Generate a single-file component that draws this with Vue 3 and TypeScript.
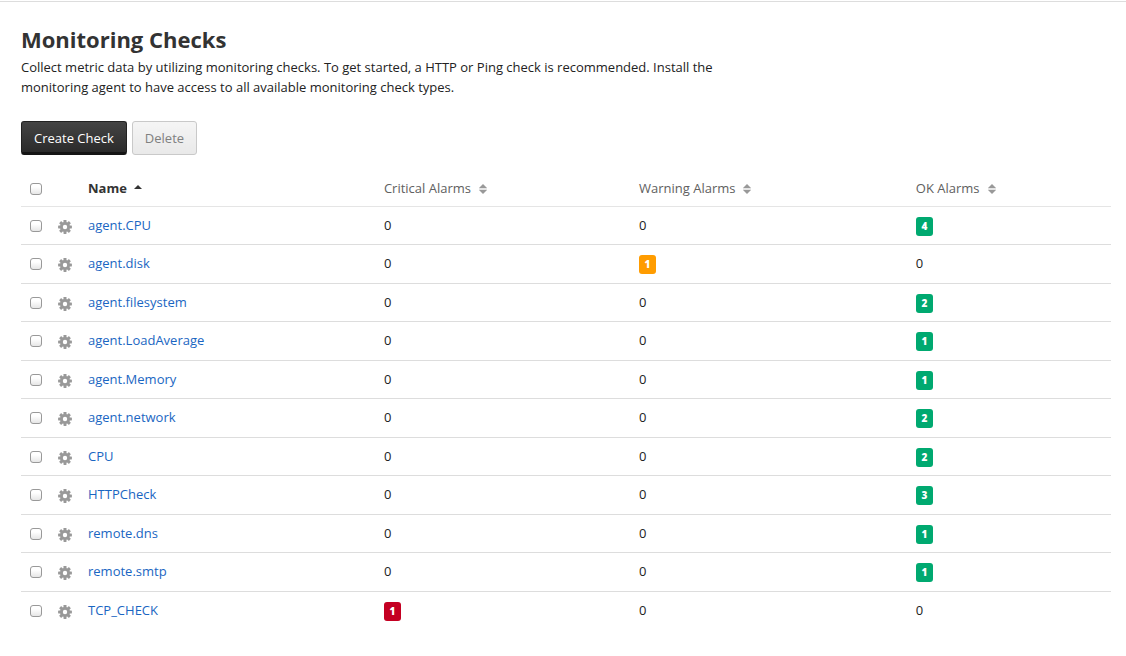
<script setup lang="ts">
import { computed, ref } from 'vue'

type CountKey = 'critical' | 'warning' | 'ok'
type SortKey = 'name' | CountKey

interface Check {
  name: string
  critical: number
  warning: number
  ok: number
}

const columns: { key: SortKey; label: string }[] = [
  { key: 'name', label: 'Name' },
  { key: 'critical', label: 'Critical Alarms' },
  { key: 'warning', label: 'Warning Alarms' },
  { key: 'ok', label: 'OK Alarms' },
]
const countKeys: CountKey[] = ['critical', 'warning', 'ok']

const checks: Check[] = [
  { name: 'agent.CPU', critical: 0, warning: 0, ok: 4 },
  { name: 'agent.disk', critical: 0, warning: 1, ok: 0 },
  { name: 'agent.filesystem', critical: 0, warning: 0, ok: 2 },
  { name: 'agent.LoadAverage', critical: 0, warning: 0, ok: 1 },
  { name: 'agent.Memory', critical: 0, warning: 0, ok: 1 },
  { name: 'agent.network', critical: 0, warning: 0, ok: 2 },
  { name: 'CPU', critical: 0, warning: 0, ok: 2 },
  { name: 'HTTPCheck', critical: 0, warning: 0, ok: 3 },
  { name: 'remote.dns', critical: 0, warning: 0, ok: 1 },
  { name: 'remote.smtp', critical: 0, warning: 0, ok: 1 },
  { name: 'TCP_CHECK', critical: 1, warning: 0, ok: 0 },
]

const sortKey = ref<SortKey>('name')
const ascending = ref(true)
const selected = ref<string[]>([])

const sorted = computed(() => {
  const key = sortKey.value
  const direction = ascending.value ? 1 : -1
  return [...checks].sort((a, b) => {
    const order =
      key === 'name'
        ? a.name.toLowerCase().localeCompare(b.name.toLowerCase())
        : a[key] - b[key]
    return order * direction
  })
})

const allSelected = computed({
  get: () => selected.value.length === checks.length,
  set: (on: boolean) => {
    selected.value = on ? checks.map((c) => c.name) : []
  },
})

function sortBy(key: SortKey) {
  ascending.value = sortKey.value === key ? !ascending.value : true
  sortKey.value = key
}
</script>

<template>
  <main class="page">
    <h1>Monitoring Checks</h1>
    <p class="intro">
      Collect metric data by utilizing monitoring checks. To get started, a HTTP or Ping check is
      recommended. Install the monitoring agent to have access to all available monitoring check
      types.
    </p>

    <div class="actions">
      <button type="button" class="btn primary">Create Check</button>
      <button type="button" class="btn" :disabled="selected.length === 0">Delete</button>
    </div>

    <table>
      <colgroup>
        <col class="col-select" />
        <col class="col-menu" />
        <col class="col-name" />
        <col class="col-critical" />
        <col class="col-warning" />
        <col />
      </colgroup>
      <thead>
        <tr>
          <th class="select">
            <input v-model="allSelected" type="checkbox" aria-label="Select all checks" />
          </th>
          <th></th>
          <th v-for="column in columns" :key="column.key" class="text" scope="col">
            <button
              type="button"
              class="sort"
              :class="{ active: sortKey === column.key }"
              @click="sortBy(column.key)"
            >
              {{ column.label }}
              <svg v-if="sortKey !== column.key" class="both" width="8" height="10" viewBox="0 0 8 10" aria-hidden="true">
                <path d="M4 0 8.2 4.2H-0.2ZM-0.2 5.8H8.2L4 10Z" />
              </svg>
              <svg v-else class="single" width="8" height="4" viewBox="0 0 8 4" aria-hidden="true">
                <path :d="ascending ? 'M4 0 8 4H0Z' : 'M0 0H8L4 4Z'" />
              </svg>
            </button>
          </th>
        </tr>
      </thead>
      <tbody>
        <tr v-for="check in sorted" :key="check.name">
          <td class="select">
            <input v-model="selected" type="checkbox" :value="check.name" :aria-label="`Select ${check.name}`" />
          </td>
          <td>
            <button type="button" class="gear" :aria-label="`Actions for ${check.name}`">
              <svg width="14" height="14" viewBox="0 0 14 14" aria-hidden="true">
                <g>
                  <rect x="5.5" y="0.1" width="3" height="13.8" rx="0.4" />
                  <rect x="5.5" y="0.1" width="3" height="13.8" rx="0.4" transform="rotate(45 7 7)" />
                  <rect x="5.5" y="0.1" width="3" height="13.8" rx="0.4" transform="rotate(90 7 7)" />
                  <rect x="5.5" y="0.1" width="3" height="13.8" rx="0.4" transform="rotate(135 7 7)" />
                  <circle cx="7" cy="7" r="5" />
                </g>
                <circle class="hole" cx="7" cy="7" r="2.2" />
              </svg>
            </button>
          </td>
          <td class="text"><a href="#">{{ check.name }}</a></td>
          <td v-for="key in countKeys" :key="key" :class="check[key] > 0 ? 'flagged' : 'text'">
            <span v-if="check[key] > 0" class="badge" :class="key">{{ check[key] }}</span>
            <template v-else>0</template>
          </td>
        </tr>
      </tbody>
    </table>
  </main>
</template>

<style>
body {
  margin: 0;
  background: #fff;
}
</style>

<style scoped>
.page {
  border-top: 1px solid #ddd;
  margin-top: 1px;
  padding: 21px 15px 24px 21px;
  color: #222;
  font: 13px/20px 'Open Sans', 'Noto Sans', sans-serif;
}

h1 {
  margin: 0 0 2px;
  color: #333;
  font-size: 22px;
  line-height: 32px;
  font-weight: 700;
}

.intro {
  max-width: 700px;
  margin: 0;
}

.actions {
  display: flex;
  gap: 5px;
  margin: 24px 0 16px;
}

button {
  font: inherit;
  cursor: pointer;
}

.btn {
  box-sizing: border-box;
  height: 34px;
  padding: 0 12px;
  border: 1px solid #c9c9c9;
  border-radius: 3px;
  background: linear-gradient(#f5f5f5, #e9e9e9);
  color: #333;
}

.btn:disabled {
  color: #808080;
  cursor: default;
}

.btn.primary {
  padding-top: 2px;
  border-color: #222;
  border-bottom: 3px solid #151515;
  background: linear-gradient(#444, #2b2b2b);
  color: #fff;
  font-weight: 500;
}

table {
  width: 100%;
  table-layout: fixed;
  border-collapse: separate;
  border-spacing: 0;
}

.col-select {
  width: 37px;
}

.col-menu {
  width: 30px;
}

.col-name {
  width: 27.15%;
}

.col-critical {
  width: 23.4%;
}

.col-warning {
  width: 25.4%;
}

th,
td {
  box-sizing: border-box;
  height: 38px;
  padding: 0;
  border-bottom: 1px solid #ddd;
  text-align: left;
  vertical-align: middle;
}

th {
  height: 36px;
  border-bottom-color: #e5e5e5;
  font-weight: 400;
}

tbody tr:nth-child(even) td {
  height: 39px;
}

tbody tr:last-child td {
  border-bottom: 0;
}

.text {
  padding-bottom: 2px;
}

.flagged {
  padding-top: 10px;
  vertical-align: top;
}

.select {
  padding-left: 9px;
}

input {
  display: block;
  box-sizing: border-box;
  width: 12px;
  height: 12px;
  margin: 0;
  appearance: none;
  border: 1px solid #999;
  border-radius: 3px;
  background: linear-gradient(#fff 30%, #e6e6e6);
}

input:checked {
  background: #777;
}

.sort {
  display: flex;
  align-items: center;
  gap: 8px;
  padding: 0;
  border: 0;
  background: none;
  color: #606060;
}

.sort.active {
  gap: 7px;
  color: #333;
  font-weight: 700;
}

.sort svg {
  fill: #999;
}

.sort .both {
  margin-top: 2px;
}

.sort .single {
  margin-bottom: 2px;
}

.sort.active svg {
  fill: #333;
}

.gear {
  display: block;
  padding: 2px 0 0;
  border: 0;
  background: none;
}

.gear svg {
  display: block;
  fill: #999;
}

.gear .hole {
  fill: #fff;
}

a {
  color: #1a66c2;
  text-decoration: none;
}

.badge {
  display: block;
  width: 17px;
  height: 19px;
  border-radius: 3px;
  color: #fff;
  font-size: 10px;
  font-weight: 800;
  line-height: 19px;
  text-align: center;
}

.badge.ok {
  background: #00a970;
}

.badge.warning {
  background: #ff9c00;
}

.badge.critical {
  background: #c40022;
}
</style>
